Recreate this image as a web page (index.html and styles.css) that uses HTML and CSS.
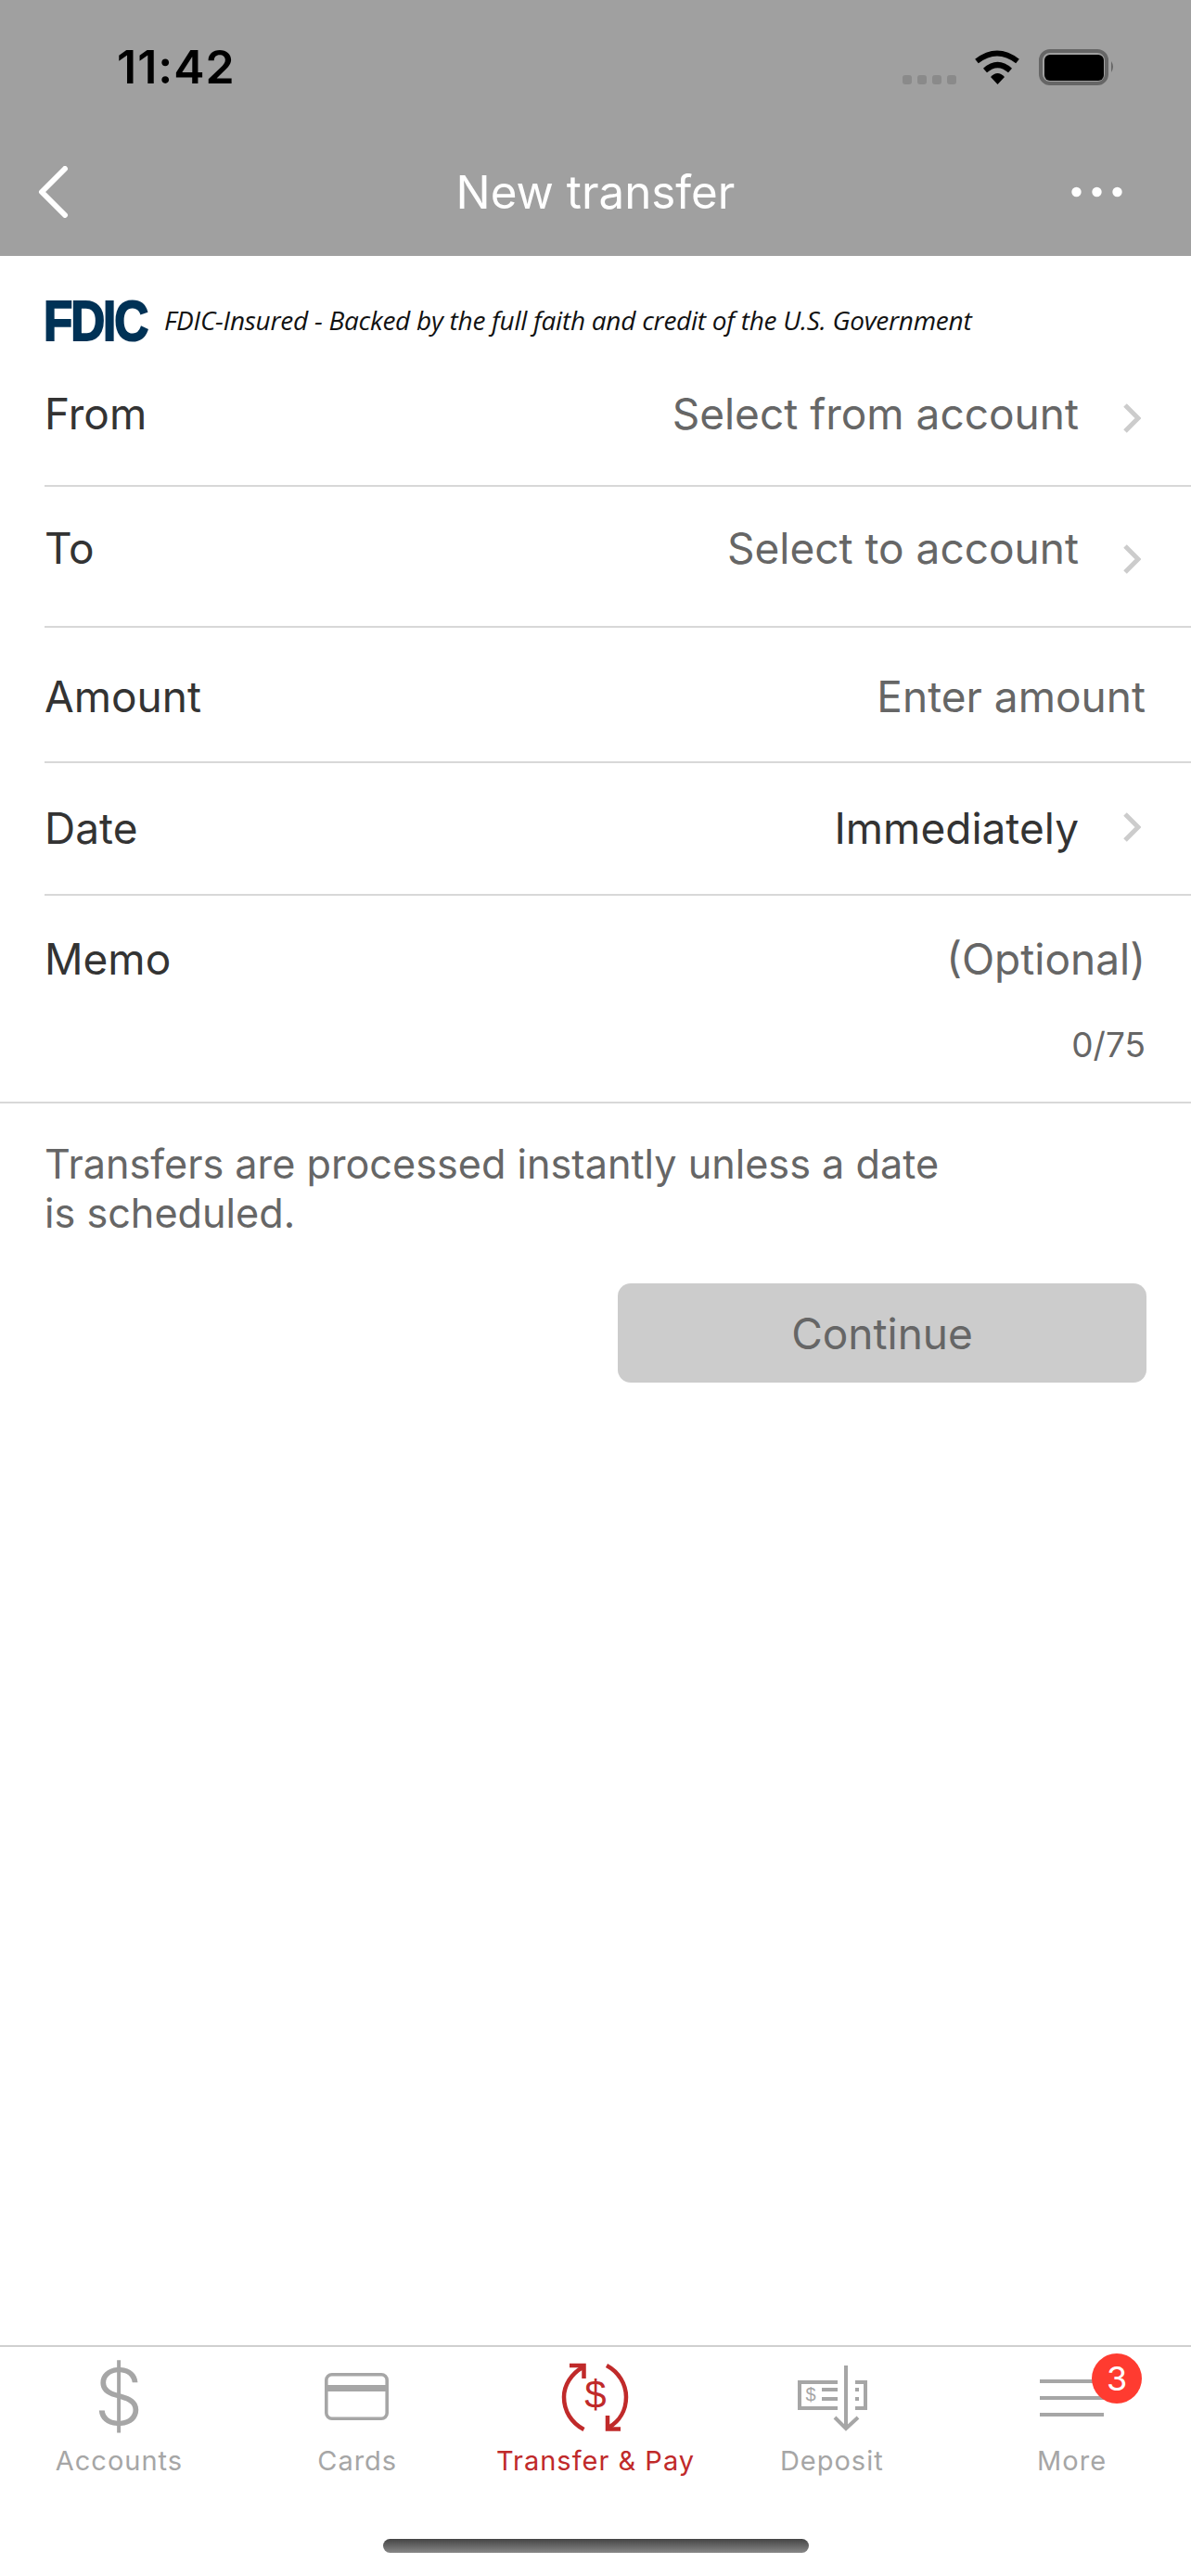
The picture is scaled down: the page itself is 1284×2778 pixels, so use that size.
FILE: index.html
```html
<!DOCTYPE html>
<html lang="en">
<head>
<meta charset="utf-8">
<title>New transfer</title>
<link rel="stylesheet" href="styles.css">
</head>
<body>
<div class="app">
  <header class="header">
    <div class="status">
      <span class="time">11:42</span>
      <svg class="status-icons" width="229" height="40" viewBox="0 0 229 40">
        <rect x="0" y="28" width="10" height="10" rx="3" fill="#8a8a8a"/>
        <rect x="16" y="28" width="10" height="10" rx="3" fill="#8a8a8a"/>
        <rect x="32" y="28" width="10" height="10" rx="3" fill="#8a8a8a"/>
        <rect x="48" y="28" width="10" height="10" rx="3" fill="#8a8a8a"/>
        <path d="M80 13Q102 -4 124 13" fill="none" stroke="#000" stroke-width="6"/>
        <path d="M89 23Q102.500 11 116 23" fill="none" stroke="#000" stroke-width="6"/>
        <path d="M102.500 38L95 30Q102.500 22 110 30Z" fill="#000"/>
        <rect x="149" y="2" width="71" height="35" rx="10" fill="none" stroke="#666" stroke-width="4"/>
        <rect x="153" y="6" width="64" height="28" rx="6" fill="#000"/>
        <path d="M225 13Q229 19 225 25Z" fill="#666"/>
      </svg>
    </div>
    <nav class="nav">
      <svg class="back" width="33" height="56" viewBox="0 0 33 56"><path d="M29 3L4 28L29 53" fill="none" stroke="#fff" stroke-width="6" stroke-linecap="round" stroke-linejoin="round"/></svg>
      <h1 class="title">New transfer</h1>
      <svg class="more-dots" width="55" height="12" viewBox="0 0 55 12"><circle cx="5.500" cy="6" r="5.200" fill="#fff"/><circle cx="27.500" cy="6" r="5.200" fill="#fff"/><circle cx="49.500" cy="6" r="5.200" fill="#fff"/></svg>
    </nav>
  </header>

  <main class="main">
    <div class="fdic">
      <span class="fdic-logo"><span class="fdic-mark">FDIC</span></span>
      <span class="fdic-text">FDIC-Insured - Backed by the full faith and credit of the U.S. Government</span>
    </div>

    <div class="row row-from row-chev">
      <span class="label">From</span>
      <span class="value-group"><span class="value">Select from account</span><svg class="chev chev-low" width="20" height="34" viewBox="0 0 20 34"><path d="M3 3L17 17L3 31" fill="none" stroke="#ccc" stroke-width="5"/></svg></span>
    </div>
    <div class="row row-to row-chev">
      <span class="label">To</span>
      <span class="value-group"><span class="value">Select to account</span><svg class="chev chev-lower" width="20" height="34" viewBox="0 0 20 34"><path d="M3 3L17 17L3 31" fill="none" stroke="#ccc" stroke-width="5"/></svg></span>
    </div>
    <div class="row row-amount">
      <span class="label">Amount</span>
      <span class="value">Enter amount</span>
    </div>
    <div class="row row-date row-chev">
      <span class="label">Date</span>
      <span class="value-group"><span class="value value-dark">Immediately</span><svg class="chev" width="20" height="34" viewBox="0 0 20 34"><path d="M3 3L17 17L3 31" fill="none" stroke="#ccc" stroke-width="5"/></svg></span>
    </div>
    <div class="memo">
      <div class="memo-line">
        <span class="label">Memo</span>
        <span class="value">(Optional)</span>
      </div>
      <div class="count">0/75</div>
    </div>

    <p class="note">Transfers are processed instantly unless a date is scheduled.</p>
    <div class="actions"><button class="continue" type="button">Continue</button></div>
  </main>

  <footer class="tabbar">
    <div class="tabs">
      <div class="tab">
        <svg class="tab-icon" width="100" height="80" viewBox="0 0 100 80"><text class="big-dollar" x="50" y="69" text-anchor="middle">$</text></svg>
        <span class="tab-label">Accounts</span>
      </div>
      <div class="tab">
        <svg class="tab-icon" width="100" height="80" viewBox="0 0 100 80"><rect x="16.800" y="14.800" width="65.400" height="47.400" rx="6" fill="none" stroke="#a6a6a6" stroke-width="3.600"/><rect x="15" y="26" width="69" height="7" fill="#a6a6a6"/></svg>
        <span class="tab-label">Cards</span>
      </div>
      <div class="tab tab-active">
        <svg class="tab-icon" width="100" height="80" viewBox="0 0 100 80">
          <g fill="none" stroke="#c02a2a" stroke-width="4.500">
            <path d="M37.500 74C24 67 16 54 16 39C16 26 24 14 36 7"/>
            <path d="M22 5H37.500V19"/>
            <path d="M62 5C75 12 83 25 83 39C83 53 76 65 64 72"/>
            <path d="M63 59V73.500H77"/>
          </g>
          <text class="mid-dollar" x="50" y="51" text-anchor="middle">$</text>
        </svg>
        <span class="tab-label">Transfer &amp; Pay</span>
      </div>
      <div class="tab">
        <svg class="tab-icon" width="100" height="80" viewBox="0 0 100 80">
          <g fill="none" stroke="#a6a6a6" stroke-width="4">
            <path d="M54 23H13V51H54"/>
            <path d="M73 23H84V51H73"/>
            <path d="M63 5V72"/>
            <path d="M51 61L63 73L76 61"/>
            <path d="M37 31H54"/>
            <path d="M37 41H54"/>
          </g>
          <rect x="73" y="29" width="4" height="4" fill="#a6a6a6"/>
          <rect x="73" y="39" width="4" height="4" fill="#a6a6a6"/>
          <text class="small-dollar" x="25" y="43" text-anchor="middle">$</text>
        </svg>
        <span class="tab-label tab-label-deposit">Deposit</span>
      </div>
      <div class="tab">
        <svg class="tab-icon" width="100" height="80" viewBox="0 0 100 80"><g fill="none" stroke="#a6a6a6" stroke-width="4"><path d="M15 22H84"/><path d="M15 40H84"/><path d="M15 58H84"/></g></svg>
        <span class="tab-label">More</span>
        <span class="badge">3</span>
      </div>
    </div>
    <div class="home-indicator"></div>
  </footer>
</div>
</body>
</html>
```
FILE: styles.css
```css
* { box-sizing: border-box; }
html, body { margin: 0; padding: 0; background: #fff; }
.app {
  width: 1284px;
  height: 2778px;
  display: flex;
  flex-direction: column;
  font-family: Inter, "Liberation Sans", sans-serif;
  overflow: hidden;
}
.header { height: 276px; background: #a0a0a0; flex: none; }
.status {
  height: 138px;
  display: flex;
  justify-content: space-between;
  align-items: flex-start;
  padding: 42px 82px 0 126px;
}
.time { font-size: 50px; line-height: 60px; font-weight: 600; color: #000; letter-spacing: 1px; }
.status-icons { margin-top: 11px; }
.nav {
  height: 138px;
  display: grid;
  grid-template-columns: 1fr auto 1fr;
  align-items: center;
  padding: 0 41px;
}
.back { justify-self: start; }
.more-dots { justify-self: end; margin-right: 33px; }
.title { margin: 0; font-size: 49.3px; line-height: 60px; font-weight: 400; color: #fff; }
.main { flex: 1; }
.fdic { display: flex; align-items: center; gap: 17px; padding: 48px 0 0 47px; height: 92px; }
.fdic-logo { width: 113px; height: 44px; display: block; flex: none; overflow: visible; }
.fdic-mark {
  display: block;
  font-family: "Liberation Sans", sans-serif;
  font-weight: 700;
  font-size: 61px;
  line-height: 44px;
  letter-spacing: -2.500px;
  color: #003256;
  -webkit-text-stroke: 2px #003256;
  transform: scaleX(0.84);
  transform-origin: left center;
}
.fdic-text {
  margin-top: -3px;
  font-family: "Open Sans", sans-serif;
  font-style: italic;
  font-size: 28px;
  line-height: 40px;
  letter-spacing: -0.26px;
  color: #111;
  white-space: nowrap;
}
.row {
  margin-left: 48px;
  padding-right: 49px;
  display: flex;
  justify-content: space-between;
  align-items: flex-start;
  border-bottom: 2px solid #d8d8d8;
}
.row-chev { padding-right: 54px; }
.row-from { padding-top: 48px; padding-bottom: 47px; }
.row-to { padding-top: 36px; padding-bottom: 54px; }
.row-amount { padding-top: 44px; padding-bottom: 40px; }
.row-date { padding-top: 40px; padding-bottom: 41px; }
.label, .value { font-size: 46px; line-height: 60px; white-space: nowrap; }
.label { color: #333; }
.value { color: #666; }
.value-dark { color: #333; }
.value-group { display: flex; align-items: flex-start; gap: 47px; }
.chev { margin-top: 12px; }
.chev-low { margin-top: 18px; }
.chev-lower { margin-top: 25px; }
.memo { padding: 38px 49px 41px 48px; border-bottom: 2px solid #d8d8d8; }
.memo-line { display: flex; justify-content: space-between; }
.count { margin-top: 43px; text-align: right; font-size: 37px; line-height: 40px; color: #666; }
.note { margin: 39px 0 0 48px; width: 990px; font-size: 43.2px; line-height: 53px; color: #666; }
.actions { display: flex; justify-content: flex-end; padding: 49px 48px 0 0; }
.continue {
  width: 570px;
  height: 107px;
  border: 0;
  border-radius: 14px;
  background: #ccc;
  color: #666;
  font-family: inherit;
  font-size: 46px;
}
.tabbar { flex: none; height: 249px; border-top: 2px solid #d0d0d0; display: flex; flex-direction: column; }
.tabs { display: grid; grid-template-columns: repeat(5, 1fr); padding-top: 15px; }
.tab { position: relative; display: flex; flex-direction: column; align-items: center; }
.tab-icon { display: block; overflow: visible; }
.tab-label { margin-top: 10px; font-size: 29px; line-height: 36px; letter-spacing: 1px; color: #a6a6a6; white-space: nowrap; }
.tab-label-deposit { margin-right: 4px; }
.tab-active .tab-label { color: #c02a2a; }
.big-dollar { font-family: Inter, sans-serif; font-weight: 300; font-size: 84px; fill: #a6a6a6; }
.mid-dollar { font-family: "Liberation Sans", sans-serif; font-size: 42px; fill: #c02a2a; }
.small-dollar { font-family: "Liberation Sans", sans-serif; font-size: 20px; fill: #a6a6a6; }
.badge {
  position: absolute;
  left: 150px;
  top: -8px;
  width: 54px;
  height: 54px;
  border-radius: 50%;
  background: #ff3b30;
  color: #fff;
  font-size: 36px;
  line-height: 54px;
  text-align: center;
}
.home-indicator {
  width: 459px;
  height: 15px;
  margin: 66px auto 0;
  border-radius: 8px;
  background: linear-gradient(#444, #888);
}
```
